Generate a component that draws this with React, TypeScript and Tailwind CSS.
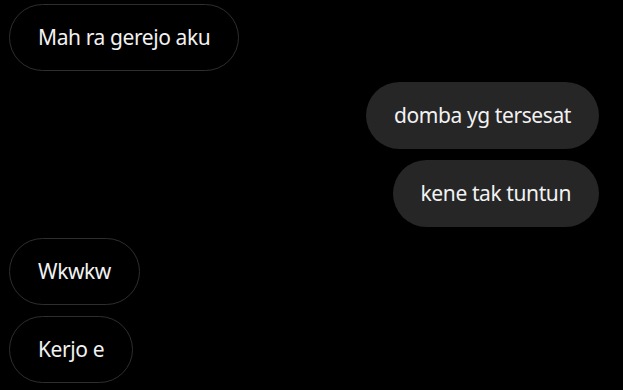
const messages = [
  { text: "Mah ra gerejo aku", mine: false },
  { text: "domba yg tersesat", mine: true },
  { text: "kene tak tuntun", mine: true },
  { text: "Wkwkw", mine: false },
  { text: "Kerjo e", mine: false },
];

export default function App() {
  return (
    <div
      className="w-[623px] h-[390px] bg-black overflow-hidden flex flex-col gap-[11px] pt-[4px] pl-[9px] pr-[24px]"
      style={{ fontFamily: '"Noto Sans", "Open Sans", sans-serif' }}
    >
      {messages.map((m, i) =>
        m.mine ? (
          <div key={i} className="flex justify-end">
            <div className="h-[67px] flex items-center px-[28px] rounded-full bg-[#262626] text-[21px] tracking-[-0.4px] text-[#f2f2f2]">
              {m.text}
            </div>
          </div>
        ) : (
          <div key={i} className="flex justify-start">
            <div className="h-[67px] flex items-center px-[28px] rounded-full border border-[#2e2e2e] text-[21px] tracking-[-0.4px] text-[#f2f2f2]">
              {m.text}
            </div>
          </div>
        )
      )}
    </div>
  );
}
